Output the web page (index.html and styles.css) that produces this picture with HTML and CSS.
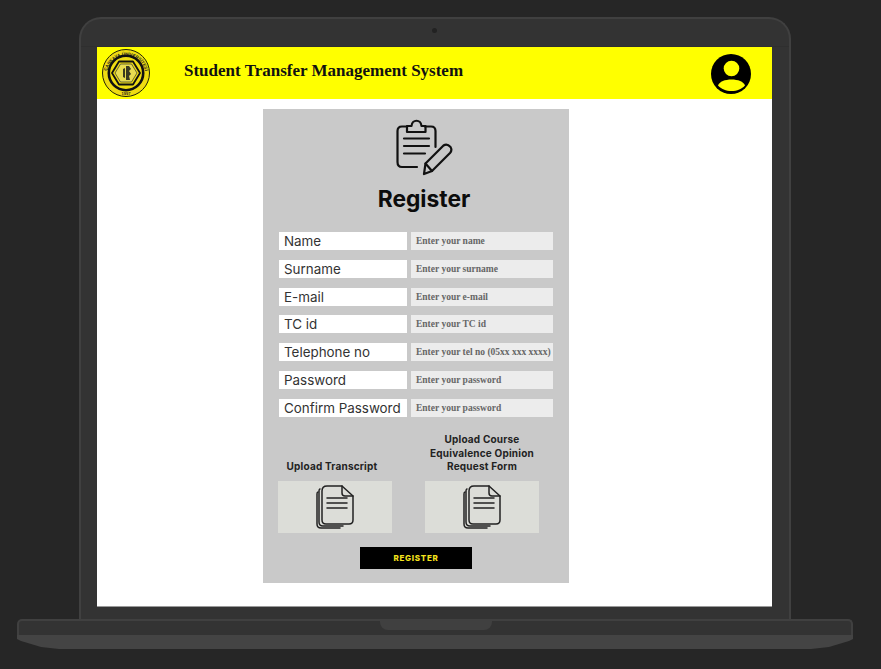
FILE: index.html
```html
<!DOCTYPE html>
<html lang="en">
<head>
    <meta charset="UTF-8">
    <title>Student Transfer Management System</title>
    <link rel="stylesheet" href="styles.css">
</head>
<body>
    <div class="laptop">
        <div class="lid">
            <div class="bezel"><span class="camera"></span></div>
            <div class="screen">
                <header class="topbar">
                    <svg class="logo" viewBox="0 0 50 50" width="50" height="50">
                        <defs>
                            <path id="logoArc" d="M5.5 27a19.5 19.5 0 1 1 39 0"/>
                        </defs>
                        <circle cx="25" cy="25" r="23.5" fill="#efdc12" stroke="#23230a" stroke-width="1"/>
                        <text class="logo-text"><textPath href="#logoArc" startOffset="50%" text-anchor="middle">ÇANKAYA ÜNİVERSİTESİ</textPath></text>
                        <circle cx="25" cy="25" r="17.2" fill="#efdc12" stroke="#111" stroke-width="2.6"/>
                        <path d="M18 13.5H32L39 25L32 36.5H18L11 25Z" fill="#efdc12" stroke="#111" stroke-width="1.8" stroke-linejoin="round"/>
                        <path d="M19.5 16H30.5L36 25L30.5 34H19.5L14 25Z" fill="#e8dc50" stroke="#333" stroke-width="0.7"/>
                        <path d="M25 18h3l2 3-2 2 2 3-2 2 1 4h-4zM22 21l2-1v10l-2-1z" fill="#3a3a20"/>
                        <text class="logo-year" x="25" y="46.5" text-anchor="middle">1997</text>
                    </svg>
                    <h1 class="title">Student Transfer Management System</h1>
                    <svg class="avatar" viewBox="0 0 40 40" width="40" height="40">
                        <circle cx="20" cy="20" r="20" fill="#000"/>
                        <circle cx="20.5" cy="14.5" r="7.8" fill="#ffff00"/>
                        <path d="M7 31.5C8.5 27.5 14 25.5 20.5 25.5S32.5 27.5 34 31.5C31 35 26 37 20.5 37S10 35 7 31.5Z" fill="#ffff00"/>
                    </svg>
                </header>

                <div class="panel">
                    <div class="panel-head">
                        <svg class="clipboard" viewBox="0 0 57 57" width="57" height="57" fill="none" stroke="#111" stroke-width="2.2" stroke-linecap="round" stroke-linejoin="round">
                            <path d="M11 7.5H6Q1.5 7.5 1.5 12V43Q1.5 48 6 48H21"/>
                            <path d="M29 7.5H35Q39.5 7.5 39.5 12V28"/>
                            <path d="M11 7H15.5C16 0 25 0 25.5 7H29.5V13H11Z"/>
                            <path d="M8 19.5H33M8 27H33M8 34.5H29"/>
                            <path d="M28 55L29.5 44.5L47.5 26.5Q51 24 54.5 28Q56.5 31 54 34L36 52Z"/>
                            <path d="M29.5 44.5L36 52"/>
                        </svg>
                        <h2 class="panel-title">Register</h2>
                    </div>

                    <div class="fields">
                        <div class="field-label">Name</div>
                        <div class="field-input">Enter your name</div>
                        <div class="field-label">Surname</div>
                        <div class="field-input">Enter your surname</div>
                        <div class="field-label">E-mail</div>
                        <div class="field-input">Enter your e-mail</div>
                        <div class="field-label">TC id</div>
                        <div class="field-input">Enter your TC id</div>
                        <div class="field-label">Telephone no</div>
                        <div class="field-input">Enter your tel no (05xx xxx xxxx)</div>
                        <div class="field-label">Password</div>
                        <div class="field-input">Enter your password</div>
                        <div class="field-label">Confirm Password</div>
                        <div class="field-input">Enter your password</div>
                    </div>

                    <div class="uploads">
                        <div class="upload">
                            <div class="upload-label upload-label-short">Upload Transcript</div>
                            <div class="upload-box">
                                <svg viewBox="0 0 38 44" width="38" height="44" fill="none" stroke="#222" stroke-width="1.5" stroke-linecap="round" stroke-linejoin="round">
                                    <path d="M11 1H26L37 11V35Q37 39 33 39H10Q6 39 6 35V6Q6 1 11 1Z"/>
                                    <path d="M26 1V8Q26 11 29 11H37"/>
                                    <path d="M11 13H31M11 18H31M11 23H31"/>
                                    <path d="M4 4Q3 4 3 7V37Q3 41 7 41H27"/>
                                    <path d="M2 7Q1 7 1 9V39Q1 43 5 43H24"/>
                                </svg>
                            </div>
                        </div>
                        <div class="upload">
                            <div class="upload-label">Upload Course Equivalence Opinion Request Form</div>
                            <div class="upload-box">
                                <svg viewBox="0 0 38 44" width="38" height="44" fill="none" stroke="#222" stroke-width="1.5" stroke-linecap="round" stroke-linejoin="round">
                                    <path d="M11 1H26L37 11V35Q37 39 33 39H10Q6 39 6 35V6Q6 1 11 1Z"/>
                                    <path d="M26 1V8Q26 11 29 11H37"/>
                                    <path d="M11 13H31M11 18H31M11 23H31"/>
                                    <path d="M4 4Q3 4 3 7V37Q3 41 7 41H27"/>
                                    <path d="M2 7Q1 7 1 9V39Q1 43 5 43H24"/>
                                </svg>
                            </div>
                        </div>
                    </div>

                    <div class="submit-row">
                        <button class="submit">REGISTER</button>
                    </div>
                </div>
            </div>
        </div>
        <div class="base">
            <div class="base-top"><span class="notch"></span></div>
            <div class="base-bottom"></div>
        </div>
    </div>
</body>
</html>
```

FILE: styles.css
```css
* {
    box-sizing: border-box;
}

body {
    margin: 0;
    height: 669px;
    overflow: hidden;
    background-color: #262626;
    font-family: 'Inter', 'Liberation Sans', sans-serif;
    color: #222;
}

.laptop {
    display: flex;
    flex-direction: column;
    padding: 17px 0 0 17px;
}

.lid {
    width: 712px;
    height: 602px;
    margin-left: 62px;
    padding: 0 17px 12px 16px;
    border: 2px solid #404040;
    border-bottom: none;
    border-radius: 22px 22px 0 0;
    background-color: #333;
}

.bezel {
    display: flex;
    justify-content: center;
    align-items: center;
    height: 28px;
    margin: 0 -17px 0 -16px;
    padding-bottom: 4px;
    border-bottom: 1px solid #2f2f2f;
}

.camera {
    width: 5px;
    height: 5px;
    margin-left: -2px;
    border-radius: 50%;
    background-color: #222;
}

.screen {
    height: 560px;
    background-color: #fff;
    border-bottom: 1px solid #999;
}

.topbar {
    display: flex;
    align-items: center;
    height: 52px;
    padding: 0 21px 0 4px;
    background-color: #ffff00;
}

.logo-text {
    font-family: 'Liberation Sans', sans-serif;
    font-size: 4.4px;
    font-weight: 700;
    fill: #222;
}

.logo-year {
    font-family: 'Liberation Sans', sans-serif;
    font-size: 4px;
    font-weight: 700;
    fill: #222;
}

.title {
    flex: 1;
    margin: 0 0 4px 33px;
    font-family: 'Liberation Serif', serif;
    font-size: 17px;
    font-weight: 700;
    color: #111;
}

.avatar {
    margin-top: 1px;
}

.panel {
    width: 306px;
    height: 474px;
    margin: 10px 0 0 166px;
    padding: 10px 16px 0;
    background-color: #c9c9c9;
}

.panel-head {
    display: flex;
    flex-direction: column;
    align-items: center;
    padding-left: 16px;
}

.panel-title {
    margin: 9px 0 0;
    font-size: 22.8px;
    font-weight: 700;
    line-height: 28px;
    color: #0c0c0c;
}

.fields {
    display: grid;
    grid-template-columns: 128px 142px;
    grid-auto-rows: 18px;
    column-gap: 4px;
    row-gap: 9.8px;
    margin-top: 19px;
}

.field-label {
    padding-left: 5px;
    background-color: #fff;
    font-size: 13.4px;
    line-height: 18px;
    color: #333;
    white-space: nowrap;
}

.field-input {
    padding-left: 5px;
    background-color: #ececec;
    font-family: 'Liberation Serif', serif;
    font-size: 9.5px;
    font-weight: 700;
    line-height: 18px;
    color: #666;
    white-space: nowrap;
}

.uploads {
    display: flex;
    gap: 33px;
    margin-top: 15px;
    margin-left: -1px;
}

.upload {
    display: flex;
    flex-direction: column;
    justify-content: flex-end;
    width: 114px;
    height: 101px;
}

.upload-label {
    margin-bottom: 7px;
    font-size: 10px;
    font-weight: 700;
    line-height: 13.5px;
    letter-spacing: 0.2px;
    text-align: center;
    color: #222;
}

.upload-label-short {
    padding-right: 6px;
}

.upload-box {
    display: flex;
    justify-content: center;
    align-items: center;
    height: 52px;
    background-color: #dcddd8;
}

.submit-row {
    display: flex;
    justify-content: center;
    margin-top: 14px;
}

.submit {
    width: 112px;
    height: 22px;
    padding: 0;
    border: none;
    background-color: #000;
    color: #f5e31c;
    font-family: 'Inter', 'Liberation Sans', sans-serif;
    font-size: 8px;
    font-weight: 800;
    letter-spacing: 0.7px;
}

.base {
    width: 836px;
}

.base-top {
    display: flex;
    justify-content: center;
    height: 16px;
    padding-left: 1px;
    border: 2px solid #404040;
    border-bottom: none;
    border-radius: 5px 5px 0 0;
    background-color: #333;
}

.notch {
    width: 112px;
    height: 9px;
    border-radius: 0 0 8px 8px;
    background-color: #404040;
}

.base-bottom {
    height: 14px;
    background-color: #444;
    clip-path: polygon(0 0, 100% 0, 100% 4px, calc(100% - 4px) 6px, calc(100% - 24px) 12px, calc(100% - 42px) 14px, 42px 14px, 24px 12px, 4px 6px, 0 4px);
}
```
